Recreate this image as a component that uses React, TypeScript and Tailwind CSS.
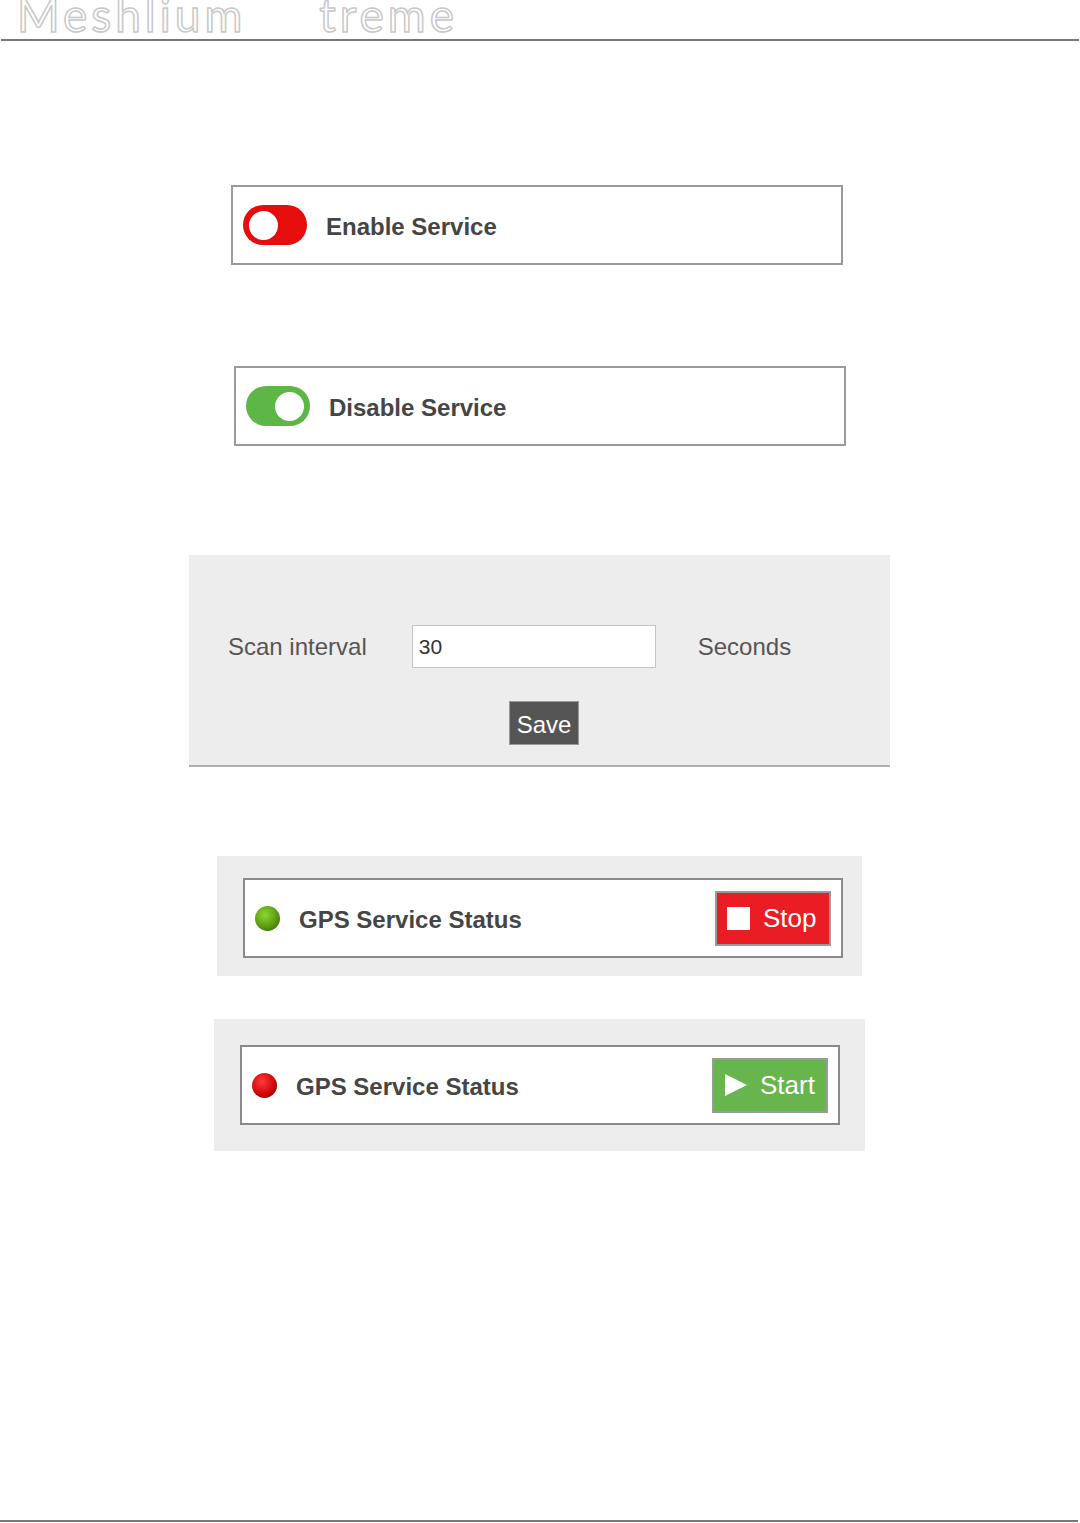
import React from "react";

function Toggle({ on }: { on: boolean }) {
  return (
    <div
      className={`w-[64px] h-[40px] rounded-full flex items-center px-[4px] ${
        on ? "bg-[#5db645] justify-end" : "bg-[#e60d0d] justify-start"
      }`}
    >
      <div
        className={`w-[33px] h-[33px] rounded-full bg-white border-2 ${
          on ? "border-[#5db645]" : "border-[#e60d0d]"
        }`}
      />
    </div>
  );
}

function ServiceBox({ on, label, ml }: { on: boolean; label: string; ml: string }) {
  return (
    <div className={`${ml} w-[612px] h-[80px] border-2 border-[#9a9a9a] bg-white flex items-center pl-[10px] gap-[19px]`}>
      <Toggle on={on} />
      <span className="mt-[3px] text-[24px] font-bold text-[#454545] [font-family:'Liberation_Sans',Arial,sans-serif]">{label}</span>
    </div>
  );
}

function GpsBox({ running }: { running: boolean }) {
  return (
    <div className="w-[600px] h-[80px] border-2 border-[#8a8a8a] bg-white flex items-center pl-[10px] pr-[10px]">
      <div
        className={`w-[25px] h-[25px] rounded-full ${
          running
            ? "bg-[radial-gradient(circle_at_40%_35%,#8fd62c,#5a9a12_55%,#2f5608)]"
            : "bg-[radial-gradient(circle_at_40%_35%,#ff3a3a,#d00808_55%,#6a0404)]"
        }`}
      />
      <span className="ml-[19px] mt-[3px] text-[24px] font-bold text-[#454545] [font-family:'Liberation_Sans',Arial,sans-serif]">
        GPS Service Status
      </span>
      <div className="ml-auto">
        {running ? (
          <div className="w-[116px] h-[55px] bg-[#ea1d25] border-2 border-[#9a9a9a] flex items-center pl-[10px] gap-[13px]">
            <div className="w-[23px] h-[23px] bg-white" />
            <span className="text-white text-[26px] [font-family:'Liberation_Sans',Arial,sans-serif]">Stop</span>
          </div>
        ) : (
          <div className="w-[116px] h-[55px] bg-[#68b54d] border-2 border-[#9a9a9a] flex items-center pl-[10px] gap-[12px]">
            <svg width="24" height="24" viewBox="0 0 24 24">
              <polygon points="1,1 23,12 1,23" fill="#ffffff" />
            </svg>
            <span className="text-white text-[26px] [font-family:'Liberation_Sans',Arial,sans-serif]">Start</span>
          </div>
        )}
      </div>
    </div>
  );
}

export default function App() {
  return (
    <div className="w-[1080px] min-h-[1523px] bg-white flex flex-col [font-family:'Liberation_Sans',Arial,sans-serif]">
      <div className="h-[39px] overflow-hidden relative">
        <div className="mt-[-8px] ml-[17px] flex gap-[73px] text-[46px] leading-none text-transparent [-webkit-text-stroke:1.5px_#c8c8c8] [font-family:Lato,sans-serif] tracking-[4px]">
          <span>Meshlium</span>
          <span>treme</span>
        </div>
      </div>
      <div className="mx-[1px] h-[2px] bg-[#777777]" />

      <div className="mt-[144px]">
        <ServiceBox on={false} label="Enable Service" ml="ml-[231px]" />
      </div>
      <div className="mt-[101px]">
        <ServiceBox on={true} label="Disable Service" ml="ml-[234px]" />
      </div>

      <div className="mt-[109px] ml-[189px] w-[701px] h-[212px] bg-[#ededed] border-b-2 border-[#b0b0b0] flex flex-col">
        <div className="mt-[70px] h-[43px] flex items-center text-[24px] text-[#555555]">
          <span className="ml-[39px]">Scan interval</span>
          <div className="ml-[45px] w-[244px] h-[43px] bg-white border border-[#c4c4c4] flex items-center pl-[6px] text-[21px] text-[#333333]">
            30
          </div>
          <span className="ml-[42px]">Seconds</span>
        </div>
        <div className="mt-[33px] ml-[320px] w-[70px] h-[44px] bg-[#555555] border border-[#999999] flex items-center justify-center pt-[4px] text-white text-[24px]">
          Save
        </div>
      </div>

      <div className="mt-[89px] ml-[217px] w-[645px] h-[120px] bg-[#ededed] pt-[22px] pl-[26px]">
        <GpsBox running={true} />
      </div>
      <div className="mt-[43px] ml-[214px] w-[651px] h-[132px] bg-[#ededed] pt-[26px] pl-[26px]">
        <GpsBox running={false} />
      </div>

      <div className="mt-auto mb-[1px] mr-[2px] h-[2px] bg-[#777777]" />
    </div>
  );
}
